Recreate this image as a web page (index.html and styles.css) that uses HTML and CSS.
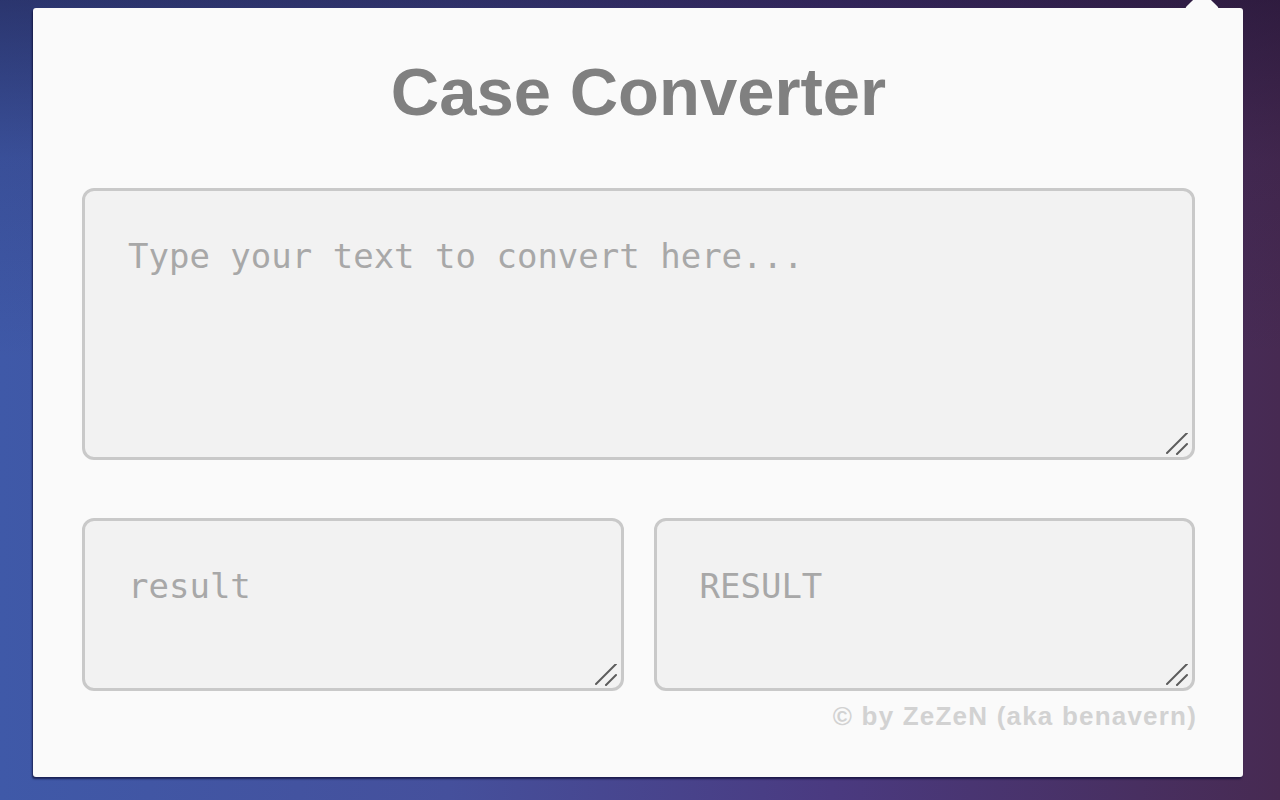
FILE: index.html
```html
<!DOCTYPE html>
<html lang="en">
<head>
<meta charset="utf-8">
<title>Case Converter</title>
<link rel="stylesheet" href="styles.css">
</head>
<body>
<div class="panel">
  <h1 class="title">Case Converter</h1>
  <div class="box box-main">
    <span class="placeholder">Type your text to convert here...</span>
    <svg class="grip" width="22" height="22" viewBox="0 0 22 22"><line x1="1" y1="20" x2="21" y2="0"/><line x1="11" y1="21" x2="21" y2="11"/></svg>
  </div>
  <div class="row">
    <div class="box box-small">
      <span class="placeholder">result</span>
      <svg class="grip" width="22" height="22" viewBox="0 0 22 22"><line x1="1" y1="20" x2="21" y2="0"/><line x1="11" y1="21" x2="21" y2="11"/></svg>
    </div>
    <div class="box box-small">
      <span class="placeholder">RESULT</span>
      <svg class="grip" width="22" height="22" viewBox="0 0 22 22"><line x1="1" y1="20" x2="21" y2="0"/><line x1="11" y1="21" x2="21" y2="11"/></svg>
    </div>
  </div>
  <div class="credit">© by ZeZeN (aka benavern)</div>
</div>
</body>
</html>
```
FILE: styles.css
```css
html, body {
  margin: 0;
  height: 100%;
}
body {
  width: 1280px;
  height: 800px;
  overflow: hidden;
  background:
    linear-gradient(180deg, rgba(18, 10, 40, 0.45) 0%, rgba(18, 10, 40, 0.12) 20%, rgba(18, 10, 40, 0) 45%),
    linear-gradient(90deg, #3f59a8 0%, #45509c 35%, #4a3a80 65%, #472a52 100%);
  padding: 8px 37px 23px 33px;
  box-sizing: border-box;
  font-family: "Liberation Sans", Arial, sans-serif;
}
.panel {
  position: relative;
  height: 769px;
  background: #fafafa;
  border-radius: 3px;
  box-shadow: -1px 2px 2px rgba(10, 10, 50, 0.7);
  padding: 47px 48px 0 49px;
  box-sizing: border-box;
}
.panel::before {
  content: "";
  position: absolute;
  width: 24px;
  height: 24px;
  background: #fafafa;
  top: -12px;
  left: 1157px;
  transform: rotate(45deg);
  border-radius: 2px;
}
.title {
  margin: 0;
  font-size: 67px;
  line-height: 74px;
  font-weight: bold;
  color: #808080;
  text-align: center;
}
.box {
  position: relative;
  background: #f2f2f2;
  border: 3px solid #c9c9c9;
  border-radius: 12px;
  box-sizing: border-box;
  padding: 45px 43px;
  font-family: "DejaVu Sans Mono", "Liberation Mono", monospace;
  font-size: 34px;
  line-height: 40px;
  color: #a8a8a8;
}
.box-main {
  margin-top: 59px;
  height: 272px;
}
.row {
  display: flex;
  gap: 30px;
  margin-top: 58px;
}
.box-small {
  flex: 1;
  height: 173px;
}
.grip {
  position: absolute;
  right: 4px;
  bottom: 2px;
}
.grip line {
  stroke: #5c5c5c;
  stroke-width: 2;
  stroke-linecap: round;
}
.credit {
  margin-top: 10px;
  text-align: right;
  font-size: 26px;
  line-height: 30px;
  font-weight: bold;
  letter-spacing: 1.2px;
  color: #d2d2d2;
  margin-right: -2px;
}
```
